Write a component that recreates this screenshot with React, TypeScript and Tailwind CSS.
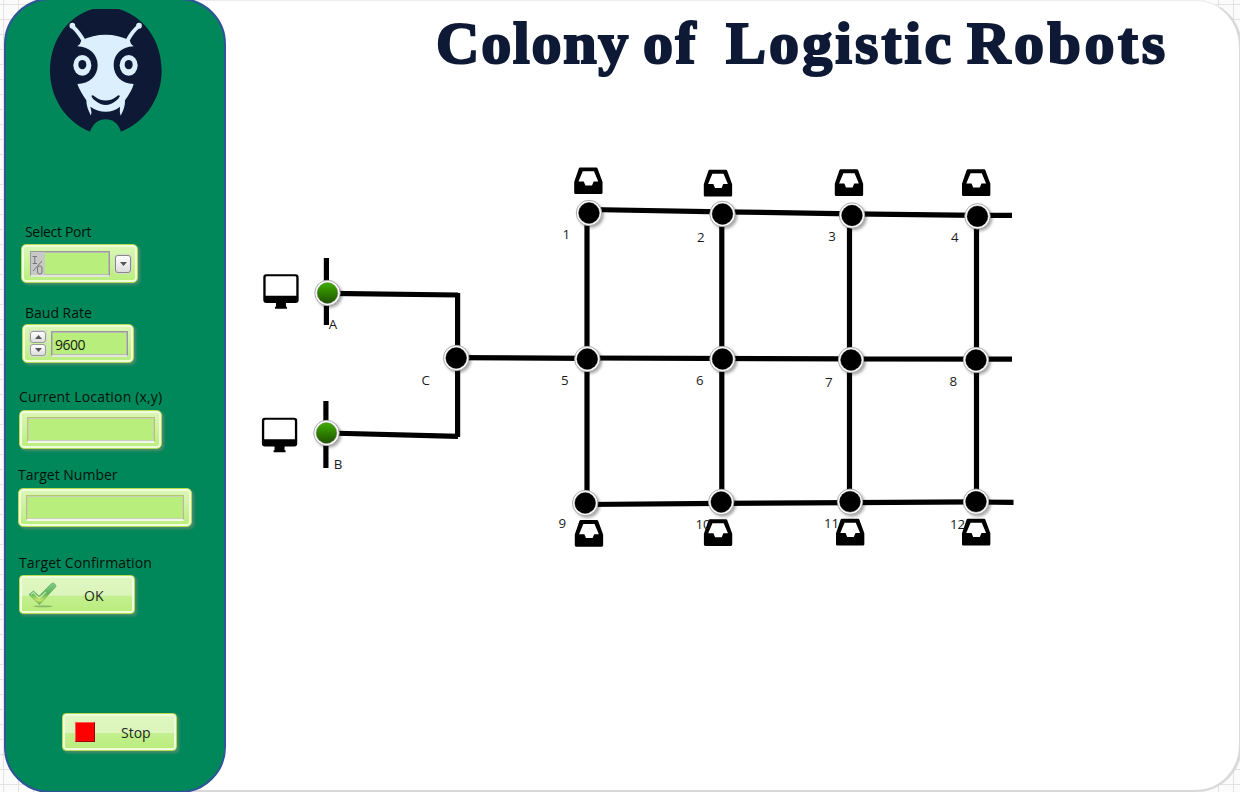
import type { ReactNode } from 'react';

const NODES: [number, number, boolean?][] = [
  [589, 213], [722.5, 214], [852, 215.5], [977.5, 216.3],
  [587.3, 359], [722.5, 359], [851, 360], [976, 360],
  [585.2, 503], [721.2, 502], [850, 501.7], [976, 501.7],
  [456.2, 358], [327.5, 293, true], [326.5, 433, true],
];

const LINES: [number, number, number, number][] = [
  [589, 209.5, 722, 211.8], [722, 211.8, 852, 213.8], [852, 213.8, 977, 215.3], [977, 215.3, 1012, 215.3],
  [456, 357.6, 587, 358.3], [587, 358, 851, 358.8], [851, 359, 1012, 359.2],
  [585, 504.5, 721, 503.3], [721, 503.3, 850, 502.7], [850, 502.7, 976, 501.8], [976, 502, 1013.5, 502.3],
  [587, 213, 587, 503], [721.8, 214, 721.8, 502], [849.5, 216, 849.5, 502], [976.5, 216, 976.5, 502],
  [457.6, 293, 457.6, 437], [328, 293.3, 458, 295], [328, 433, 458, 436.3],
  [326.4, 258, 326.4, 325], [325.9, 401, 325.9, 468],
];

const TRAYS: [number, number][] = [
  [574.2, 167.4], [703.8, 169.8], [834.8, 169.3], [962, 169.3],
  [574.8, 520], [703.9, 519.2], [836, 518.8], [962, 518.8],
];

const LABELS: [string, number, number][] = [
  ['1', 562.5, 238.7], ['2', 697, 241.5], ['3', 828.3, 241.3], ['4', 951, 242],
  ['5', 561, 385], ['6', 696, 385], ['7', 825, 386.5], ['8', 949.5, 386],
  ['9', 558.5, 528], ['10', 695.5, 528.7], ['11', 824, 527.7], ['12', 950, 528.7],
  ['A', 328.8, 329], ['B', 333.8, 469], ['C', 421.5, 385],
];

function Network() {
  return (
    <svg className="absolute left-0 top-0 h-[792px] w-[1240px]" viewBox="0 0 1240 792">
      <defs>
        <linearGradient id="led" x1="0" y1="0" x2="0" y2="1">
          <stop offset="0" stopColor="#3fae00" />
          <stop offset="1" stopColor="#1f5200" />
        </linearGradient>
        <filter id="soft" x="-50%" y="-50%" width="200%" height="200%">
          <feGaussianBlur stdDeviation="1.8" />
        </filter>
      </defs>
      {LINES.map(([x1, y1, x2, y2], i) => (
        <line key={i} x1={x1} y1={y1} x2={x2} y2={y2} stroke="#000" strokeWidth="5.2" />
      ))}
      {TRAYS.map(([x, y], i) => (
        <path
          key={i}
          transform={`translate(${x} ${y}) scale(0.3295)`}
          fillRule="evenodd"
          d="M18 0H67Q70 0 71 3L86 44V77Q86 81 82 81H4Q0 81 0 77V44L14 3Q15 0 18 0ZM26 12H60L73 43H59L54 55H34L29 43H13Z"
        />
      ))}
      {[[263.3, 274.3], [261.9, 417.8]].map(([x, y], i) => (
        <path
          key={i}
          transform={`translate(${x} ${y}) scale(0.3333)`}
          fillRule="evenodd"
          d="M8 0H97Q106 0 106 9V77Q106 86 97 86H68V97H71V103H35V97H38V86H9Q0 86 0 77V9Q0 0 8 0ZM11 6Q7 6 7 10V64H99V10Q99 6 95 6Z"
        />
      ))}
      {LABELS.map(([t, x, y]) => (
        <text key={t} x={x} y={y} fontSize="13.3" fill="#1c1c1c" style={{ fontFamily: '"Open Sans", sans-serif' }}>{t}</text>
      ))}
      {NODES.map(([x, y, on], i) => (
        <g key={i}>
          <circle cx={x + 2} cy={y + 2} r="12.8" fill="#000" opacity="0.35" filter="url(#soft)" />
          <circle cx={x} cy={y} r="12.7" fill="#fff" stroke="#a0a0a0" strokeWidth="0.9" />
          <circle cx={x} cy={y} r="10.4" fill={on ? 'url(#led)' : '#000'} stroke={on ? '#77726c' : '#000'} strokeWidth="0.4" />
        </g>
      ))}
    </svg>
  );
}

function AntLogo() {
  return (
    <svg className="ml-[44px] mt-[9px] h-[124px] w-[112px] shrink-0" viewBox="150 27 336 372">
      <path fill="#0e1a35" d="M270 395C195 365 150 290 150 213C150 120 205 48 278 27H356C430 48 485 120 485 213C485 290 440 365 363 395C354 369 338 358 317 358C296 358 279 370 270 395Z" />
      <g stroke="#dceffd" strokeLinecap="round" fill="none">
        <path strokeWidth="12" d="M252 124Q236 96 217 79M381 124Q398 92 417 78" />
        <path strokeWidth="17" d="M217 77h.1M417 77h.1" />
      </g>
      <path fill="#dceffd" d="M232 139Q242 133 244 121Q278 104 317 104Q355 104 389 121Q391 133 401 139C363 140 341 165 341 195C341 228 365 251 401 252Q396 272 375 301Q376 322 362 347Q358 335 360 320Q342 335 317 335Q292 335 271 320Q276 335 273 347Q259 322 259 301Q240 274 232 252C269 251 293 228 293 195C293 165 270 141 232 139Z" />
      <ellipse cx="247" cy="196" rx="27" ry="31" fill="#dceffd" />
      <ellipse cx="386" cy="196" rx="27" ry="31" fill="#dceffd" />
      <ellipse cx="247" cy="194" rx="12" ry="14" fill="#0e1a35" />
      <ellipse cx="386" cy="194" rx="12" ry="14" fill="#0e1a35" />
      <path fill="#0e1a35" d="M274 288Q278 282 285 290Q317 313 349 290Q355 282 360 288Q356 297 347 303Q317 327 287 303Q277 297 274 288Z" />
    </svg>
  );
}

const FRAME =
  'flex items-center rounded-[5px] border border-[#b4dc50] bg-linear-to-b from-[#dcf7b8] to-[#b9ee7c] shadow-[inset_0_0_0_2px_#f0fddd,2px_2px_3px_rgba(110,140,120,0.7)]';

const READOUT = 'h-[26px] border border-b-2 border-[#b5c56c] border-b-[#f2f9e8] bg-[#b8ee7c] shadow-[inset_0_0_0_1px_#c9cdba]';

function Label({ className, children }: { className: string; children: ReactNode }) {
  return <div className={`h-4 shrink-0 whitespace-nowrap text-[14px] leading-4 text-[#02120c] ${className}`}>{children}</div>;
}

function Arrow({ up }: { up?: boolean }) {
  return (
    <svg className="h-1 w-[7px] shrink-0" viewBox="0 0 7 4">
      <path fill="#555" d={up ? 'M0 4h7L3.500 0z' : 'M0 0h7L3.500 4z'} />
    </svg>
  );
}

function Check() {
  return (
    <svg className="ml-2 h-[26px] w-[30px]" viewBox="0 0 30 26">
      <defs>
        <linearGradient id="chk" x1="0" y1="0" x2="0" y2="1">
          <stop offset="0" stopColor="#7fcb90" />
          <stop offset="0.5" stopColor="#5eb552" />
          <stop offset="0.8" stopColor="#c8e763" />
          <stop offset="1" stopColor="#60aa4d" />
        </linearGradient>
      </defs>
      <ellipse cx="15" cy="24.3" rx="10" ry="0.9" fill="#74a85e" opacity="0.8" />
      <path fill="url(#chk)" stroke="#5fa964" strokeWidth="0.7" d="M1 12.500L5.500 9L11 14L23.500 1.500Q27 0 28 4.500L11.500 22.500Z" />
      <path stroke="#d9f5d9" strokeWidth="1.2" fill="none" d="M3 12.500L5.500 10.500L11 16.500L18 10" opacity="0.75" />
    </svg>
  );
}

const BUTTON =
  'rounded-[4px] border border-[#b4dc50] bg-[linear-gradient(#dff6c0_0%,#dcf5bc_52%,#c4ef90_54%,#b8ec7a_100%)] shadow-[inset_0_0_0_2px_#f0fddd,2px_2px_3px_rgba(110,140,120,0.7)] flex items-center text-[14px] text-[#1c2a1c]';

export default function App() {
  return (
    <div className="relative flex h-[792px] w-[1240px] overflow-hidden bg-[#fbfbfb] bg-[linear-gradient(to_right,#e2e2e2_1px,transparent_1px),linear-gradient(to_bottom,#e2e2e2_1px,transparent_1px)] bg-[size:15px_15px] bg-[position:3px_4px] font-['Open_Sans',sans-serif]">
      <aside className="relative z-10 -mt-[2px] ml-1 flex h-[795px] w-[222px] shrink-0 flex-col rounded-[46px] border-2 border-[#2f5597] bg-[#00885a]">
        <AntLogo />
        <Label className="ml-[19px] mt-[91px] w-[100px] tracking-[-0.33px]">Select Port</Label>
        <div className={`ml-[15px] mt-[4px] h-[39px] w-[117px] shrink-0 pl-2 ${FRAME}`}>
          <div className="flex h-[26px] w-[80px] border border-b-2 border-[#999] border-b-[#e2e8dc] bg-[#b8ee7c] shadow-[inset_0_0_0_1px_#b7b9b2]">
            <div className="flex h-full w-3.5 bg-[#c8c8c8]">
              <svg className="h-[23px] w-[13px]" viewBox="0 0 13 23">
                <path d="M1.500 4.500h4.500M1.500 11.500h4.500M3.800 4.500v7M11 9L2 19" stroke="#777" fill="none" />
                <rect x="6.500" y="14" width="4.500" height="8" rx="2" stroke="#777" fill="none" />
              </svg>
            </div>
          </div>
          <div className="ml-[5px] flex h-[18px] w-[16px] items-center justify-center rounded-[3px] border border-[#888] bg-linear-to-b from-white to-[#ddd] shadow-[0_0_0_1px_#d4dccb]"><Arrow /></div>
        </div>
        <Label className="ml-[19px] mt-[22px] w-[100px]">Baud Rate</Label>
        <div className={`ml-[16px] mt-[3px] h-[39px] w-[112px] shrink-0 pl-[7px] ${FRAME}`}>
          <div className="flex flex-col gap-px shadow-[0_0_0_1px_#d4dccb]">
            <div className="flex h-3 w-4 items-center justify-center rounded-[3px] border border-[#999] bg-linear-to-b from-white to-[#ddd]"><Arrow up /></div>
            <div className="flex h-3 w-4 items-center justify-center rounded-[3px] border border-[#999] bg-linear-to-b from-white to-[#ddd]"><Arrow /></div>
          </div>
          <div className="ml-[5px] flex h-[26px] w-[77px] items-center border border-b-2 border-[#999] border-b-[#e2e8dc] bg-[#b8ee7c] pl-[3px] pt-[3px] text-[14px] leading-5 tracking-[-0.5px] text-[#17220f] shadow-[inset_0_0_0_1px_#b7b9b2]">9600</div>
        </div>
        <Label className="ml-[13px] mt-[26px] w-[180px] tracking-[0.17px]">Current Location (x,y)</Label>
        <div className={`ml-[13px] mt-[5px] h-[39px] w-[143px] shrink-0 justify-center ${FRAME}`}>
          <div className={`w-[128px] ${READOUT}`} />
        </div>
        <Label className="ml-[12px] mt-[18px] w-[180px]">Target Number</Label>
        <div className={`ml-[12px] mt-[5px] h-[39px] w-[174px] shrink-0 justify-center ${FRAME}`}>
          <div className={`w-[158px] ${READOUT}`} />
        </div>
        <Label className="ml-[13px] mt-[28px] w-[180px] tracking-[0.08px]">Target Confirmation</Label>
        <button className={`ml-[13px] mt-[4px] h-[39px] w-[116px] shrink-0 ${BUTTON}`}>
          <Check />
          <span className="ml-[26px] mt-px">OK</span>
        </button>
        <button className={`ml-[56px] mt-[99px] h-[38px] w-[115px] shrink-0 ${BUTTON}`}>
          <span className="ml-3 h-5 w-5 border border-[#ff5a4a] border-b-[#a00000] border-r-[#a00000] bg-[#ff0000]" />
          <span className="ml-[26px] mt-px">Stop</span>
        </button>
      </aside>
      <main className="-ml-[110px] h-[792px] w-[1126px] shrink-0 rounded-[46px] border-b-2 border-r-[3px] border-t border-[#d9d9d9] border-t-[#eeeeee] bg-white pl-[320px] pt-[4px]">
        <h1 className="flex h-[76px] whitespace-nowrap font-['Liberation_Serif',serif] text-[60px] font-bold leading-[76px] text-[#0e1a35] [-webkit-text-stroke:2.200px_#0e1a35]">
          <span className="w-[207px] tracking-[1.8px]">Colony</span>
          <span className="w-[83px] tracking-[2.4px]">of</span>
          <span className="w-[241px] tracking-[3.1px]">Logistic</span>
          <span className="tracking-[3.6px]">Robots</span>
        </h1>
      </main>
      <Network />
    </div>
  );
}
